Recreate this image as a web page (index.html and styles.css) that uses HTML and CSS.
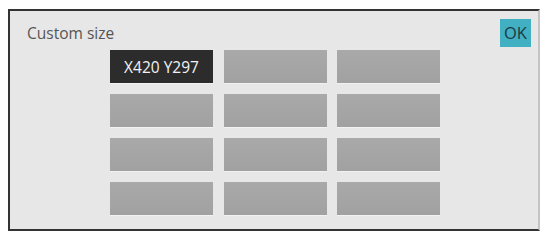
FILE: index.html
```html
<!DOCTYPE html>
<html>
<head>
<meta charset="utf-8">
<link rel="stylesheet" href="styles.css">
</head>
<body>
<div class="dialog">
  <div class="header">
    <span class="title">Custom size</span>
    <button class="ok">OK</button>
  </div>
  <div class="grid">
    <div class="cell selected">X420 Y297</div>
    <div class="cell"></div>
    <div class="cell"></div>
    <div class="cell"></div>
    <div class="cell"></div>
    <div class="cell"></div>
    <div class="cell"></div>
    <div class="cell"></div>
    <div class="cell"></div>
    <div class="cell"></div>
    <div class="cell"></div>
    <div class="cell"></div>
  </div>
</div>
</body>
</html>
```
FILE: styles.css
```css
html, body {
  margin: 0;
  padding: 0;
  background: #ffffff;
}
body {
  font-family: "Open Sans", "Noto Sans", sans-serif;
}
.dialog {
  box-sizing: border-box;
  margin: 9px 0 0 8px;
  width: 532px;
  height: 222px;
  background: #e7e7e7;
  border: 2px solid #333333;
  border-right-color: #c4c4c4;
  display: flex;
  flex-direction: column;
}
.header {
  display: flex;
  align-items: center;
  justify-content: space-between;
  padding: 8px 7px 0 17px;
  height: 28px;
}
.title {
  font-size: 15.5px;
  color: #555555;
  line-height: 20px;
}
.ok {
  width: 31px;
  height: 28px;
  padding: 0;
  border: none;
  background: #41b0c3;
  color: #1c3a42;
  font-family: "Open Sans", "Noto Sans", sans-serif;
  font-size: 16.5px;
  line-height: 28px;
}
.grid {
  margin-top: 3px;
  padding-left: 100px;
  display: grid;
  grid-template-columns: repeat(3, 103px);
  grid-auto-rows: 33px;
  column-gap: 10.5px;
  row-gap: 11px;
}
.cell {
  background: linear-gradient(#a9a9a9, #a1a1a1);
  box-shadow: 0 1px 0 #f2f2f2;
}
.cell.selected {
  background: #2c2c2c;
  color: #f2f2f2;
  font-size: 15.5px;
  display: flex;
  align-items: center;
  justify-content: center;
}
```
